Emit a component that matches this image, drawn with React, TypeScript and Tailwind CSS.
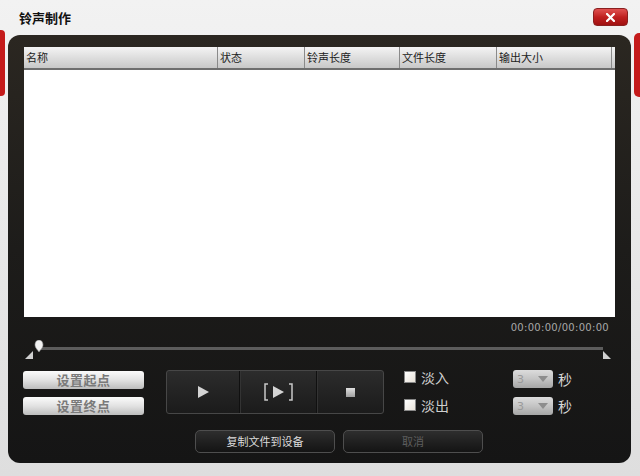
import React from "react";

const cjk = { fontFamily: '"Noto Sans CJK SC", "Noto Sans", sans-serif' };

function HeaderCell({ label, w }: { label: string; w: string }) {
  return (
    <div className={`${w} h-full flex items-center pl-[2px] border-r border-[#8a8a8a] text-[11px] text-[#222] shrink-0`}>
      {label}
    </div>
  );
}

function LightButton({ label }: { label: string }) {
  return (
    <div className="w-[121px] h-[18px] rounded-[3px] bg-gradient-to-b from-[#fbfbfb] via-[#e2e2e2] to-[#bdbdbd] flex items-center justify-center text-[13px] font-bold text-[#7a7a7a] tracking-[0.5px]">
      {label}
    </div>
  );
}

function FadeRow({ label }: { label: string }) {
  return (
    <div className="flex items-center h-[18px]">
      <div className="w-[12px] h-[12px] border border-[#888] bg-gradient-to-br from-[#ffffff] to-[#e8e2d8]" />
      <div className="ml-[5px] text-[14px] text-[#cfcfcf] leading-none">{label}</div>
    </div>
  );
}

function SecRow() {
  return (
    <div className="flex items-center h-[18px]">
      <div className="w-[40px] h-[18px] rounded-[3px] bg-gradient-to-b from-[#dcdcdc] via-[#c4c4c4] to-[#a6a6a6] flex items-center pl-[4px] pr-[5px] justify-between">
        <span className="text-[11px] text-[#9a9a9a] leading-none" style={{ fontFamily: '"DejaVu Sans", sans-serif' }}>3</span>
        <svg width="10" height="6" viewBox="0 0 10 6"><path d="M0 0 L10 0 L5 6 Z" fill="#8d8d8d" /></svg>
      </div>
      <div className="ml-[5px] text-[14px] text-[#d8d8d8] leading-none">秒</div>
    </div>
  );
}

function DarkButton({ label, dim }: { label: string; dim?: boolean }) {
  return (
    <div className={`w-[140px] h-[23px] rounded-[5px] border border-[#4e4e4e] bg-gradient-to-b from-[#2e2e2e] to-[#141414] flex items-center justify-center text-[11px] ${dim ? "text-[#5e5e5e]" : "text-[#dcdcdc]"}`}>
      {label}
    </div>
  );
}

export default function App() {
  return (
    <div className="relative w-[640px] h-[476px] overflow-hidden bg-gradient-to-b from-[#f2f2f2] via-[#e8e8e8] to-[#dedede]" style={cjk}>
      {/* red side accents */}
      <div className="absolute left-0 top-[30px] w-[5px] h-[66px] rounded-r-[4px] bg-[#c41a1a]" />
      <div className="absolute right-0 top-[33px] w-[6px] h-[64px] rounded-l-[5px] bg-[#c41a1a]" />

      {/* title bar */}
      <div className="h-[35px] flex items-start justify-between pl-[19px] pr-[12px]">
        <div className="mt-[8px] text-[13px] font-bold text-[#111]">铃声制作</div>
        <div className="mt-[8px] w-[35px] h-[18px] rounded-[4px] bg-gradient-to-b from-[#e05050] via-[#c02020] to-[#a01010] border border-[#8a2020] flex items-center justify-center">
          <svg width="9" height="9" viewBox="0 0 9 9">
            <path d="M1 1 L8 8 M8 1 L1 8" stroke="#fff" strokeWidth="2.2" strokeLinecap="square" />
          </svg>
        </div>
      </div>

      {/* dark panel */}
      <div className="mx-[8px] w-[623px] h-[428px] rounded-[12px] bg-gradient-to-b from-[#2b2721] via-[#1d1c1a] to-[#151515] flex flex-col px-[16px] pt-[12px]">
        {/* table */}
        <div className="w-[591px] h-[270px] bg-white flex flex-col">
          <div className="h-[23px] flex border-b-2 border-[#6e6e6e] bg-gradient-to-b from-[#f4f4f4] via-[#dedede] to-[#c8c8c8]">
            <HeaderCell label="名称" w="w-[194px]" />
            <HeaderCell label="状态" w="w-[87px]" />
            <HeaderCell label="铃声长度" w="w-[95px]" />
            <HeaderCell label="文件长度" w="w-[97px]" />
            <HeaderCell label="输出大小" w="w-[115px]" />
          </div>
        </div>

        {/* time */}
        <div className="h-[21px] flex items-center justify-end pr-[6px] text-[10px] text-[#a8a8a8] tracking-[0.3px]" style={{ fontFamily: '"DejaVu Sans", sans-serif' }}>
          00:00:00/00:00:00
        </div>

        {/* slider */}
        <div className="relative h-[26px]">
          <div className="absolute left-[16px] right-[12px] top-[9px] h-[3px] bg-[#5c5c5c]" />
          <svg className="absolute left-[10px] top-[2px]" width="10" height="13" viewBox="0 0 10 13">
            <path d="M5 0 C8 0 9 3 9 5 C9 8 6 10 5 12 C4 10 1 8 1 5 C1 3 2 0 5 0 Z" fill="#f2f2f2" stroke="#999" strokeWidth="0.6" />
          </svg>
          <svg className="absolute left-[1px] top-[13px]" width="8" height="8" viewBox="0 0 8 8">
            <path d="M8 0 L8 8 L0 8 Z" fill="#d0d0d0" />
          </svg>
          <svg className="absolute right-[4px] top-[13px]" width="8" height="8" viewBox="0 0 8 8">
            <path d="M0 0 L8 8 L0 8 Z" fill="#d0d0d0" />
          </svg>
        </div>

        {/* controls row */}
        <div className="mt-[6px] h-[44px] flex items-start">
          <div className="flex flex-col gap-[8px] pt-[1px] ml-[-1px]">
            <LightButton label="设置起点" />
            <LightButton label="设置终点" />
          </div>

          <div className="ml-[22px] w-[218px] h-[44px] rounded-[3px] border border-[#474747] bg-gradient-to-b from-[#2c2c2c] to-[#1b1b1b] flex">
            <div className="w-[73px] h-full flex items-center justify-center border-r border-[#101010]">
              <svg width="11" height="12" viewBox="0 0 11 12"><path d="M0 0 L11 6 L0 12 Z" fill="#d4d4d4" /></svg>
            </div>
            <div className="w-[77px] h-full flex items-center justify-center border-r border-[#101010] border-l border-l-[#333]">
              <div className="flex items-center gap-[4px]">
                <svg width="5" height="18" viewBox="0 0 5 18"><path d="M4 1 L1 1 L1 17 L4 17" stroke="#c8c8c8" strokeWidth="1.5" fill="none" /></svg>
                <svg width="11" height="12" viewBox="0 0 11 12"><path d="M0 0 L11 6 L0 12 Z" fill="#d4d4d4" /></svg>
                <svg width="5" height="18" viewBox="0 0 5 18"><path d="M1 1 L4 1 L4 17 L1 17" stroke="#c8c8c8" strokeWidth="1.5" fill="none" /></svg>
              </div>
            </div>
            <div className="flex-1 h-full flex items-center justify-center border-l border-[#333]">
              <div className="w-[9px] h-[9px] bg-gradient-to-b from-[#e0e0e0] to-[#a0a0a0]" />
            </div>
          </div>

          <div className="ml-[20px] mt-[-2px] flex flex-col gap-[10px]">
            <FadeRow label="淡入" />
            <FadeRow label="淡出" />
          </div>

          <div className="ml-[64px] flex flex-col gap-[9px]">
            <SecRow />
            <SecRow />
          </div>
        </div>

        {/* bottom buttons */}
        <div className="mt-[16px] flex pl-[171px] gap-[8px]">
          <DarkButton label="复制文件到设备" />
          <DarkButton label="取消" dim />
        </div>
      </div>
    </div>
  );
}
